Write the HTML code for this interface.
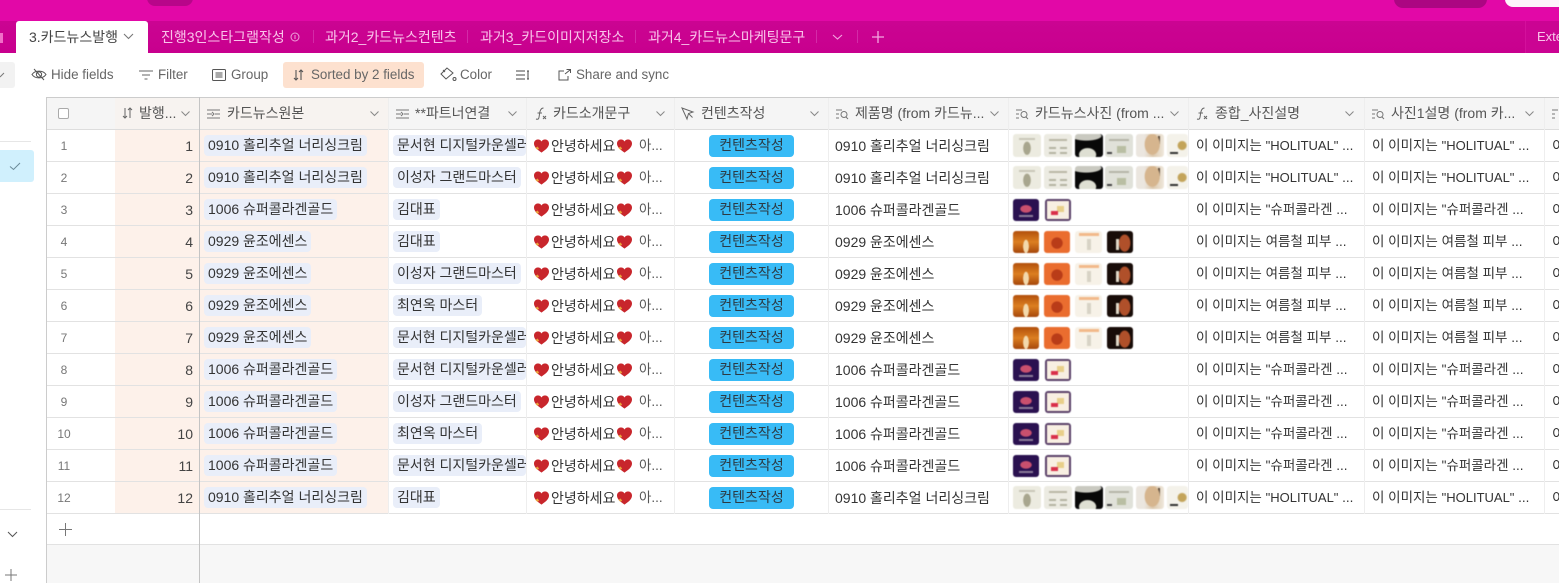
<!DOCTYPE html>
<html><head><meta charset="utf-8">
<style>
*{box-sizing:border-box}
html,body{margin:0;padding:0;width:1559px;height:583px;overflow:hidden;background:#fff}
body{position:relative;font-family:"Liberation Sans","Noto Sans CJK KR",sans-serif;font-size:14px;color:#333}
.a{position:absolute}
.tab{position:absolute;top:28px;color:#f9c4ea;white-space:nowrap;line-height:18px;font-size:14px}
.sep{position:absolute;top:30px;width:1px;height:13px;background:#d42aa8}
.tb{position:absolute;top:66px;color:#666;white-space:nowrap;line-height:18px;font-size:13.4px}
.th{position:absolute;top:98px;height:31px;line-height:31px;color:#555;white-space:nowrap;font-size:14px}
svg{position:absolute;overflow:visible}
.r{position:absolute;left:47px;width:1512px;height:32px;border-bottom:1px solid #e2e2e2}
.r>*{position:absolute;white-space:nowrap}
.n{left:5px;width:24px;text-align:center;top:8px;line-height:16px;font-size:12px;color:#777;font-weight:400}
.v{right:1366px;top:7px;line-height:18px;font-size:14px;color:#444;font-weight:400}
.p1,.p2{top:5px;height:21px;line-height:20px;background:#e9eef9;border-radius:4px;padding:0 4px;font-style:normal;color:#333}
.p1{left:157px}
.p2{left:346px;max-width:133px;overflow:hidden;padding-right:4px}
.h1,.h2{width:15px;height:14px;top:9px}
.h1{left:487px}
.h2{left:570px}
.g{left:504px;top:7px;line-height:18px}
.g2{left:592px;top:7px;line-height:18px;color:#555;font-size:13.5px}
.bt{left:662px;top:5px;width:85px;height:22px;line-height:21px;background:#38bbf6;border-radius:4px;text-align:center;color:#2c3a44}
.pr{left:788px;top:7px;line-height:18px}
.d1{left:1149px;top:7px;line-height:18px;width:166px;overflow:hidden;font-size:13.5px}
.d2{left:1325px;top:7px;line-height:18px;width:166px;overflow:hidden;font-size:13.5px}
.d1 em,.d2 em{font-style:normal;font-size:13px}
.z{left:1505px;top:7px;line-height:18px}
.x{position:absolute;top:4px;width:28px;height:23px;border-radius:3px;filter:blur(.5px)}
.c1{left:966px}.c2{left:997px}.c3{left:1028px}.c4{left:1058px}.c5{left:1089px}.c6{left:1120px;width:21px}
.ha{background:radial-gradient(ellipse 4px 7px at 50% 62%,#a8a68e 90%,transparent),linear-gradient(#c9c7b8,#c9c7b8) 50% 18%/16px 2px no-repeat,#ecebe0}
.hb{background:linear-gradient(#b9b7a6,#b9b7a6) 50% 22%/18px 2px no-repeat,linear-gradient(#b4b3a2,#b4b3a2) 25% 62%/7px 2px no-repeat,linear-gradient(#b4b3a2,#b4b3a2) 75% 62%/7px 2px no-repeat,linear-gradient(#b4b3a2,#b4b3a2) 25% 85%/7px 2px no-repeat,linear-gradient(#b4b3a2,#b4b3a2) 75% 85%/7px 2px no-repeat,#ecebe2}
.hc{background:radial-gradient(ellipse 9px 7px at 45% 90%,#dedfd3 90%,transparent),radial-gradient(ellipse 16px 5px at 40% 8%,#c9c9c0 90%,transparent),#080808}
.hd{background:linear-gradient(#b9bea3,#b9bea3) 62% 75%/9px 7px no-repeat,linear-gradient(#b5b5a8,#b5b5a8) 50% 25%/20px 2px no-repeat,linear-gradient(#444,#444) 10% 88%/5px 2px no-repeat,#e0e1d9}
.he{background:radial-gradient(ellipse 8px 11px at 58% 45%,#d6b58e 90%,transparent),linear-gradient(#5a4a3a,#5a4a3a) 85% 15%/2px 8px no-repeat,linear-gradient(90deg,#ebe6df 0 30%,#dcc8ad 60%,#efe8dc)}
.hf{background:radial-gradient(circle 5px at 72% 50%,#c3a45a 80%,transparent),linear-gradient(#333,#333) 20% 88%/8px 2px no-repeat,#f4f2ea}
.ua{background:radial-gradient(ellipse 6px 4px at 50% 45%,#c9506e 90%,transparent),linear-gradient(#8b7d9a,#8b7d9a) 50% 80%/14px 2px no-repeat,#2a1150;width:26px;height:22px;top:5px}
.ub{background:linear-gradient(#d9304a,#d9304a) 30% 68%/7px 4px no-repeat,linear-gradient(#e8cf8a,#e8cf8a) 65% 45%/7px 6px no-repeat,linear-gradient(#f8efe2,#f8efe2) 60% 50%/22px 18px no-repeat,#5a4068;width:26px;height:22px;top:5px;left:998px}
.oa{background:radial-gradient(ellipse 3px 7px at 50% 70%,#f3d9ac 90%,transparent),linear-gradient(#b2500c,#dc7f22 50%,#a6480c);width:26px;height:22px;top:5px}
.ob{background:radial-gradient(circle 6px at 50% 55%,#b93c18 90%,transparent),#ea6d2f;width:26px;height:22px;top:5px;left:997px}
.oc{background:linear-gradient(#f2b98a,#f2b98a) 50% 10%/20px 3px no-repeat,linear-gradient(#d8d3c6,#d8d3c6) 50% 75%/4px 11px no-repeat,#f7f2e8;width:27px;height:22px;top:5px;left:1028px}
.od{background:radial-gradient(ellipse 6px 9px at 68% 55%,#b0502a 90%,transparent),linear-gradient(#e0d8c8,#e0d8c8) 38% 70%/3px 11px no-repeat,#180c08;width:26px;height:22px;top:5px;left:1060px}
</style></head><body>

<!-- top bar -->
<div class="a" style="left:0;top:0;width:1559px;height:21px;background:#e208a7"></div>
<div class="a" style="left:147px;top:-10px;width:46px;height:16px;border-radius:8px;background:#b8068a"></div>
<div class="a" style="left:1394px;top:-10px;width:93px;height:18px;border-radius:9px;background:#ac0682"></div>
<div class="a" style="left:1505px;top:-10px;width:70px;height:17px;border-radius:8px;background:#fdf3fb"></div>
<div class="a" style="left:0;top:21px;width:1559px;height:32px;background:linear-gradient(#cb0492,#c8008e)"></div>
<div class="a" style="left:0;top:33px;width:3px;height:10px;background:#f070c8"></div>
<div class="a" style="left:1525px;top:21px;width:34px;height:32px;background:#cb0493;border-left:1px solid #d4109c"></div>
<div class="a" style="left:16px;top:21px;width:132px;height:33px;background:#fff;border-radius:3px 3px 0 0"></div>
<div class="tab" style="left:29px;color:#444">3.카드뉴스발행</div>
<svg style="left:123px;top:33px" width="11" height="7"><path d="M1 1l4.500 4.500L10 1" fill="none" stroke="#777" stroke-width="1.1"/></svg>
<div class="tab" style="left:161px">진행3인스타그램작성</div>
<svg style="left:290px;top:32px" width="10" height="10"><circle cx="5" cy="5" r="4" fill="none" stroke="#eea0da"/><path d="M5 3v4" stroke="#eea0da"/></svg>
<div class="sep" style="left:313px"></div>
<div class="tab" style="left:325px">과거2_카드뉴스컨텐츠</div>
<div class="sep" style="left:467px"></div>
<div class="tab" style="left:480px">과거3_카드이미지저장소</div>
<div class="sep" style="left:635px"></div>
<div class="tab" style="left:648px">과거4_카드뉴스마케팅문구</div>
<div class="sep" style="left:816px"></div>
<svg style="left:832px;top:34px" width="11" height="7"><path d="M1 1l4.500 4L10 1" fill="none" stroke="#f3a8e0" stroke-width="1.1"/></svg>
<div class="sep" style="left:857px"></div>
<svg style="left:872px;top:31px" width="12" height="12"><path d="M6 0v12M0 6h12" stroke="#f3a8e0" stroke-width="1.3"/></svg>
<div class="tab" style="left:1537px;font-size:13px">Exte</div>

<!-- toolbar -->
<div class="a" style="left:0;top:62px;width:15px;height:26px;background:#f2f2f2;border-radius:0 3px 3px 0"></div>
<svg style="left:0;top:72px" width="6" height="6"><path d="M0 5l4-4" stroke="#777" fill="none"/></svg>
<svg style="left:31px;top:68px" width="16" height="13" fill="none" stroke="#555"><path d="M1 6.500C4 2 12 2 15 6.500 12 11 4 11 1 6.500z"/><circle cx="8" cy="6.500" r="2.600"/><path d="M3 1l10 11"/></svg>
<div class="tb" style="left:51px">Hide fields</div>
<svg style="left:139px;top:70px" width="14" height="10" stroke="#666"><path d="M0 1h14M3 5h8M5.500 9h3"/></svg>
<div class="tb" style="left:158px">Filter</div>
<svg style="left:212px;top:69px" width="14" height="12" fill="none" stroke="#555"><rect x=".5" y=".5" width="13" height="11" rx="1"/><path d="M3.500 4h7M3.500 6h7M3.500 8h7"/></svg>
<div class="tb" style="left:231px">Group</div>
<div class="a" style="left:283px;top:62px;width:141px;height:26px;background:#fde1cf;border-radius:3px"></div>
<svg style="left:293px;top:69px" width="11" height="12" fill="none" stroke="#555" stroke-width="1.1"><path d="M3 1v10M1 9l2 2 2-2M8 11V1M6 3l2-2 2 2"/></svg>
<div class="tb" style="left:311px">Sorted by 2 fields</div>
<svg style="left:440px;top:67px" width="17" height="15" fill="none" stroke="#555"><path d="M7 1L1 7l5 5 7-6z"/><path d="M3 3l2 2"/><circle cx="14.500" cy="12" r="1.500"/></svg>
<div class="tb" style="left:460px">Color</div>
<svg style="left:516px;top:70px" width="15" height="11" stroke="#444"><path d="M0 1h9M0 5h9M0 9h9M12 1v8M11 1h2M11 9h2"/></svg>
<svg style="left:558px;top:69px" width="13" height="12" fill="none" stroke="#555"><path d="M6 2H1v9h9V7M7 5l5-4M8.500 .5H12.500V4"/></svg>
<div class="tb" style="left:576px">Share and sync</div>

<!-- sidebar -->
<div class="a" style="left:0;top:141px;width:31px;height:1px;background:#e6e6e6"></div>
<div class="a" style="left:0;top:150px;width:34px;height:32px;background:#d0f0fd;border-radius:0 3px 3px 0"></div>
<svg style="left:9px;top:162px" width="12" height="9"><path d="M1 4.500l3.500 3L11 1" fill="none" stroke="#6a8a98"/></svg>
<div class="a" style="left:0;top:509px;width:31px;height:1px;background:#e6e6e6"></div>
<svg style="left:7px;top:531px" width="11" height="7"><path d="M1 1l4.500 4.500L10 1" fill="none" stroke="#555"/></svg>
<svg style="left:5px;top:569px" width="12" height="12"><path d="M6 0v12M0 6h12" stroke="#777"/></svg>

<!-- grid backgrounds -->
<div class="a" style="left:47px;top:545px;width:1512px;height:38px;background:#f7f7f7"></div>
<div class="a" style="left:47px;top:97px;width:1512px;height:33px;background:#f5f5f5;border-top:1px solid #ccc;border-bottom:1px solid #ddd"></div>
<div class="a" style="left:115px;top:130px;width:84px;height:384px;background:#fdf1ea"></div>
<div class="a" style="left:200px;top:130px;width:188px;height:384px;background:#fdf1ea"></div>
<div class="a" style="left:200px;top:98px;width:188px;height:31px;background:#f7f3f0"></div>
<div class="a" style="left:115px;top:98px;width:84px;height:31px;background:#f7f3f0"></div>

<svg width="0" height="0" style="left:0;top:0"><symbol id="hh" viewBox="0 0 16 14"><path d="M8 14C3 10.500 0 8 0 4.300 0 1.700 2 0 4.300 0 5.800 0 7.200 .8 8 2.200 8.800 .8 10.200 0 11.700 0 14 0 16 1.700 16 4.300 16 8 13 10.500 8 14z" fill="#c8262c"/><path d="M1.500 9l2.500-1.500L5.500 10 3.500 11z" fill="#e9a13b"/></symbol></svg>

<!-- rows -->
<div class="r" style="top:130px"><b class="n">1</b><b class="v">1</b><i class="p1">0910 홀리추얼 너리싱크림</i><i class="p2">문서현 디지털카운셀러</i><svg class="h1" viewBox="0 0 16 14"><use href="#hh"/></svg><span class="g">안녕하세요</span><svg class="h2" viewBox="0 0 16 14"><use href="#hh"/></svg><span class="g2">아...</span><span class="bt">컨텐츠작성</span><span class="pr">0910 홀리추얼 너리싱크림</span><div class="x c1 ha"></div><div class="x c2 hb"></div><div class="x c3 hc"></div><div class="x c4 hd"></div><div class="x c5 he"></div><div class="x c6 hf"></div><span class="d1">이 이미지는 <em>"HOLITUAL"</em> ...</span><span class="d2">이 이미지는 <em>"HOLITUAL"</em> ...</span><span class="z">이</span></div>
<div class="r" style="top:162px"><b class="n">2</b><b class="v">2</b><i class="p1">0910 홀리추얼 너리싱크림</i><i class="p2">이성자 그랜드마스터</i><svg class="h1" viewBox="0 0 16 14"><use href="#hh"/></svg><span class="g">안녕하세요</span><svg class="h2" viewBox="0 0 16 14"><use href="#hh"/></svg><span class="g2">아...</span><span class="bt">컨텐츠작성</span><span class="pr">0910 홀리추얼 너리싱크림</span><div class="x c1 ha"></div><div class="x c2 hb"></div><div class="x c3 hc"></div><div class="x c4 hd"></div><div class="x c5 he"></div><div class="x c6 hf"></div><span class="d1">이 이미지는 <em>"HOLITUAL"</em> ...</span><span class="d2">이 이미지는 <em>"HOLITUAL"</em> ...</span><span class="z">이</span></div>
<div class="r" style="top:194px"><b class="n">3</b><b class="v">3</b><i class="p1">1006 슈퍼콜라겐골드</i><i class="p2">김대표</i><svg class="h1" viewBox="0 0 16 14"><use href="#hh"/></svg><span class="g">안녕하세요</span><svg class="h2" viewBox="0 0 16 14"><use href="#hh"/></svg><span class="g2">아...</span><span class="bt">컨텐츠작성</span><span class="pr">1006 슈퍼콜라겐골드</span><div class="x c1 ua"></div><div class="x ub"></div><span class="d1">이 이미지는 "슈퍼콜라겐 ...</span><span class="d2">이 이미지는 "슈퍼콜라겐 ...</span><span class="z">이</span></div>
<div class="r" style="top:226px"><b class="n">4</b><b class="v">4</b><i class="p1">0929 윤조에센스</i><i class="p2">김대표</i><svg class="h1" viewBox="0 0 16 14"><use href="#hh"/></svg><span class="g">안녕하세요</span><svg class="h2" viewBox="0 0 16 14"><use href="#hh"/></svg><span class="g2">아...</span><span class="bt">컨텐츠작성</span><span class="pr">0929 윤조에센스</span><div class="x c1 oa"></div><div class="x ob"></div><div class="x oc"></div><div class="x od"></div><span class="d1">이 이미지는 여름철 피부 ...</span><span class="d2">이 이미지는 여름철 피부 ...</span><span class="z">이</span></div>
<div class="r" style="top:258px"><b class="n">5</b><b class="v">5</b><i class="p1">0929 윤조에센스</i><i class="p2">이성자 그랜드마스터</i><svg class="h1" viewBox="0 0 16 14"><use href="#hh"/></svg><span class="g">안녕하세요</span><svg class="h2" viewBox="0 0 16 14"><use href="#hh"/></svg><span class="g2">아...</span><span class="bt">컨텐츠작성</span><span class="pr">0929 윤조에센스</span><div class="x c1 oa"></div><div class="x ob"></div><div class="x oc"></div><div class="x od"></div><span class="d1">이 이미지는 여름철 피부 ...</span><span class="d2">이 이미지는 여름철 피부 ...</span><span class="z">이</span></div>
<div class="r" style="top:290px"><b class="n">6</b><b class="v">6</b><i class="p1">0929 윤조에센스</i><i class="p2">최연옥 마스터</i><svg class="h1" viewBox="0 0 16 14"><use href="#hh"/></svg><span class="g">안녕하세요</span><svg class="h2" viewBox="0 0 16 14"><use href="#hh"/></svg><span class="g2">아...</span><span class="bt">컨텐츠작성</span><span class="pr">0929 윤조에센스</span><div class="x c1 oa"></div><div class="x ob"></div><div class="x oc"></div><div class="x od"></div><span class="d1">이 이미지는 여름철 피부 ...</span><span class="d2">이 이미지는 여름철 피부 ...</span><span class="z">이</span></div>
<div class="r" style="top:322px"><b class="n">7</b><b class="v">7</b><i class="p1">0929 윤조에센스</i><i class="p2">문서현 디지털카운셀러</i><svg class="h1" viewBox="0 0 16 14"><use href="#hh"/></svg><span class="g">안녕하세요</span><svg class="h2" viewBox="0 0 16 14"><use href="#hh"/></svg><span class="g2">아...</span><span class="bt">컨텐츠작성</span><span class="pr">0929 윤조에센스</span><div class="x c1 oa"></div><div class="x ob"></div><div class="x oc"></div><div class="x od"></div><span class="d1">이 이미지는 여름철 피부 ...</span><span class="d2">이 이미지는 여름철 피부 ...</span><span class="z">이</span></div>
<div class="r" style="top:354px"><b class="n">8</b><b class="v">8</b><i class="p1">1006 슈퍼콜라겐골드</i><i class="p2">문서현 디지털카운셀러</i><svg class="h1" viewBox="0 0 16 14"><use href="#hh"/></svg><span class="g">안녕하세요</span><svg class="h2" viewBox="0 0 16 14"><use href="#hh"/></svg><span class="g2">아...</span><span class="bt">컨텐츠작성</span><span class="pr">1006 슈퍼콜라겐골드</span><div class="x c1 ua"></div><div class="x ub"></div><span class="d1">이 이미지는 "슈퍼콜라겐 ...</span><span class="d2">이 이미지는 "슈퍼콜라겐 ...</span><span class="z">이</span></div>
<div class="r" style="top:386px"><b class="n">9</b><b class="v">9</b><i class="p1">1006 슈퍼콜라겐골드</i><i class="p2">이성자 그랜드마스터</i><svg class="h1" viewBox="0 0 16 14"><use href="#hh"/></svg><span class="g">안녕하세요</span><svg class="h2" viewBox="0 0 16 14"><use href="#hh"/></svg><span class="g2">아...</span><span class="bt">컨텐츠작성</span><span class="pr">1006 슈퍼콜라겐골드</span><div class="x c1 ua"></div><div class="x ub"></div><span class="d1">이 이미지는 "슈퍼콜라겐 ...</span><span class="d2">이 이미지는 "슈퍼콜라겐 ...</span><span class="z">이</span></div>
<div class="r" style="top:418px"><b class="n">10</b><b class="v">10</b><i class="p1">1006 슈퍼콜라겐골드</i><i class="p2">최연옥 마스터</i><svg class="h1" viewBox="0 0 16 14"><use href="#hh"/></svg><span class="g">안녕하세요</span><svg class="h2" viewBox="0 0 16 14"><use href="#hh"/></svg><span class="g2">아...</span><span class="bt">컨텐츠작성</span><span class="pr">1006 슈퍼콜라겐골드</span><div class="x c1 ua"></div><div class="x ub"></div><span class="d1">이 이미지는 "슈퍼콜라겐 ...</span><span class="d2">이 이미지는 "슈퍼콜라겐 ...</span><span class="z">이</span></div>
<div class="r" style="top:450px"><b class="n">11</b><b class="v">11</b><i class="p1">1006 슈퍼콜라겐골드</i><i class="p2">문서현 디지털카운셀러</i><svg class="h1" viewBox="0 0 16 14"><use href="#hh"/></svg><span class="g">안녕하세요</span><svg class="h2" viewBox="0 0 16 14"><use href="#hh"/></svg><span class="g2">아...</span><span class="bt">컨텐츠작성</span><span class="pr">1006 슈퍼콜라겐골드</span><div class="x c1 ua"></div><div class="x ub"></div><span class="d1">이 이미지는 "슈퍼콜라겐 ...</span><span class="d2">이 이미지는 "슈퍼콜라겐 ...</span><span class="z">이</span></div>
<div class="r" style="top:482px"><b class="n">12</b><b class="v">12</b><i class="p1">0910 홀리추얼 너리싱크림</i><i class="p2">김대표</i><svg class="h1" viewBox="0 0 16 14"><use href="#hh"/></svg><span class="g">안녕하세요</span><svg class="h2" viewBox="0 0 16 14"><use href="#hh"/></svg><span class="g2">아...</span><span class="bt">컨텐츠작성</span><span class="pr">0910 홀리추얼 너리싱크림</span><div class="x c1 ha"></div><div class="x c2 hb"></div><div class="x c3 hc"></div><div class="x c4 hd"></div><div class="x c5 he"></div><div class="x c6 hf"></div><span class="d1">이 이미지는 <em>"HOLITUAL"</em> ...</span><span class="d2">이 이미지는 <em>"HOLITUAL"</em> ...</span><span class="z">이</span></div>

<!-- bottom add row -->
<div class="a" style="left:47px;top:544px;width:1512px;height:1px;background:#e2e2e2"></div>
<svg style="left:59px;top:523px" width="13" height="13"><path d="M6.500 0v13M0 6.500h13" stroke="#777"/></svg>

<!-- vertical lines -->
<div class="a" style="left:46px;top:97px;width:1px;height:486px;background:#ccc"></div>
<div class="a" style="left:199px;top:97px;width:1px;height:486px;background:#c4c4c4"></div>
<div class="a" style="left:388px;top:98px;width:1px;height:416px;background:#eee"></div>
<div class="a" style="left:526px;top:98px;width:1px;height:416px;background:#eee"></div>
<div class="a" style="left:674px;top:98px;width:1px;height:416px;background:#eee"></div>
<div class="a" style="left:828px;top:98px;width:1px;height:416px;background:#eee"></div>
<div class="a" style="left:1008px;top:98px;width:1px;height:416px;background:#eee"></div>
<div class="a" style="left:1188px;top:98px;width:1px;height:416px;background:#eee"></div>
<div class="a" style="left:1364px;top:98px;width:1px;height:416px;background:#eee"></div>
<div class="a" style="left:1544px;top:98px;width:1px;height:416px;background:#eee"></div>

<!-- header cells -->
<div class="a" style="left:58px;top:108px;width:11px;height:11px;border:1px solid #aaa;border-radius:2px;background:#fff"></div>
<svg style="left:122px;top:108px" width="11" height="11" fill="none" stroke="#666"><path d="M3 0v10M1 8l2 2 2-2M8 10V0M6 2l2-2 2 2"/></svg>
<div class="th" style="left:139px">발행...</div>
<svg style="left:181px;top:111px" width="9" height="6"><path d="M.5 .5l4 4 4-4" fill="none" stroke="#888"/></svg>

<svg style="left:207px;top:109px" width="13" height="10" stroke="#777" fill="none"><path d="M0 1h13M0 5h5M8 5h5M0 9h13M5 3l2 2-2 2"/></svg>
<div class="th" style="left:227px">카드뉴스원본</div>
<svg style="left:370px;top:111px" width="9" height="6"><path d="M.5 .5l4 4 4-4" fill="none" stroke="#888"/></svg>

<svg style="left:396px;top:109px" width="13" height="10" stroke="#777" fill="none"><path d="M0 1h13M0 5h5M8 5h5M0 9h13M5 3l2 2-2 2"/></svg>
<div class="th" style="left:415px">**파트너연결</div>
<svg style="left:508px;top:111px" width="9" height="6"><path d="M.5 .5l4 4 4-4" fill="none" stroke="#888"/></svg>

<svg style="left:535px;top:107px" width="13" height="14" stroke="#666" fill="none"><path d="M1 12c3 1 3-1 3.500-5S6 1 8.500 1M2.500 6H7M8 9l3 3M11 9l-3 3"/></svg>
<div class="th" style="left:553px">카드소개문구</div>
<svg style="left:656px;top:111px" width="9" height="6"><path d="M.5 .5l4 4 4-4" fill="none" stroke="#888"/></svg>

<svg style="left:681px;top:107px" width="13" height="13" stroke="#666" fill="none"><path d="M1 1l11 4-4.500 1.500L6 12z"/><path d="M7.500 6.500l4 4"/></svg>
<div class="th" style="left:701px">컨텐츠작성</div>
<svg style="left:810px;top:111px" width="9" height="6"><path d="M.5 .5l4 4 4-4" fill="none" stroke="#888"/></svg>

<svg style="left:836px;top:109px" width="13" height="10" stroke="#777" fill="none"><path d="M0 1h6M0 5h3M0 9h3"/><circle cx="8" cy="5.500" r="3"/><path d="M10 8l2 2"/></svg>
<div class="th" style="left:855px">제품명 (from 카드뉴...</div>
<svg style="left:990px;top:111px" width="9" height="6"><path d="M.5 .5l4 4 4-4" fill="none" stroke="#888"/></svg>

<svg style="left:1016px;top:109px" width="13" height="10" stroke="#777" fill="none"><path d="M0 1h6M0 5h3M0 9h3"/><circle cx="8" cy="5.500" r="3"/><path d="M10 8l2 2"/></svg>
<div class="th" style="left:1035px">카드뉴스사진 (from ...</div>
<svg style="left:1170px;top:111px" width="9" height="6"><path d="M.5 .5l4 4 4-4" fill="none" stroke="#888"/></svg>

<svg style="left:1196px;top:107px" width="13" height="14" stroke="#666" fill="none"><path d="M1 12c3 1 3-1 3.500-5S6 1 8.500 1M2.500 6H7M8 9l3 3M11 9l-3 3"/></svg>
<div class="th" style="left:1215px">종합_사진설명</div>
<svg style="left:1345px;top:111px" width="9" height="6"><path d="M.5 .5l4 4 4-4" fill="none" stroke="#888"/></svg>

<svg style="left:1372px;top:109px" width="13" height="10" stroke="#777" fill="none"><path d="M0 1h6M0 5h3M0 9h3"/><circle cx="8" cy="5.500" r="3"/><path d="M10 8l2 2"/></svg>
<div class="th" style="left:1391px">사진1설명 (from 카...</div>
<svg style="left:1525px;top:111px" width="9" height="6"><path d="M.5 .5l4 4 4-4" fill="none" stroke="#888"/></svg>

<svg style="left:1552px;top:109px" width="13" height="10" stroke="#777" fill="none"><path d="M0 1h6M0 5h3M0 9h3"/></svg>
</body></html>
